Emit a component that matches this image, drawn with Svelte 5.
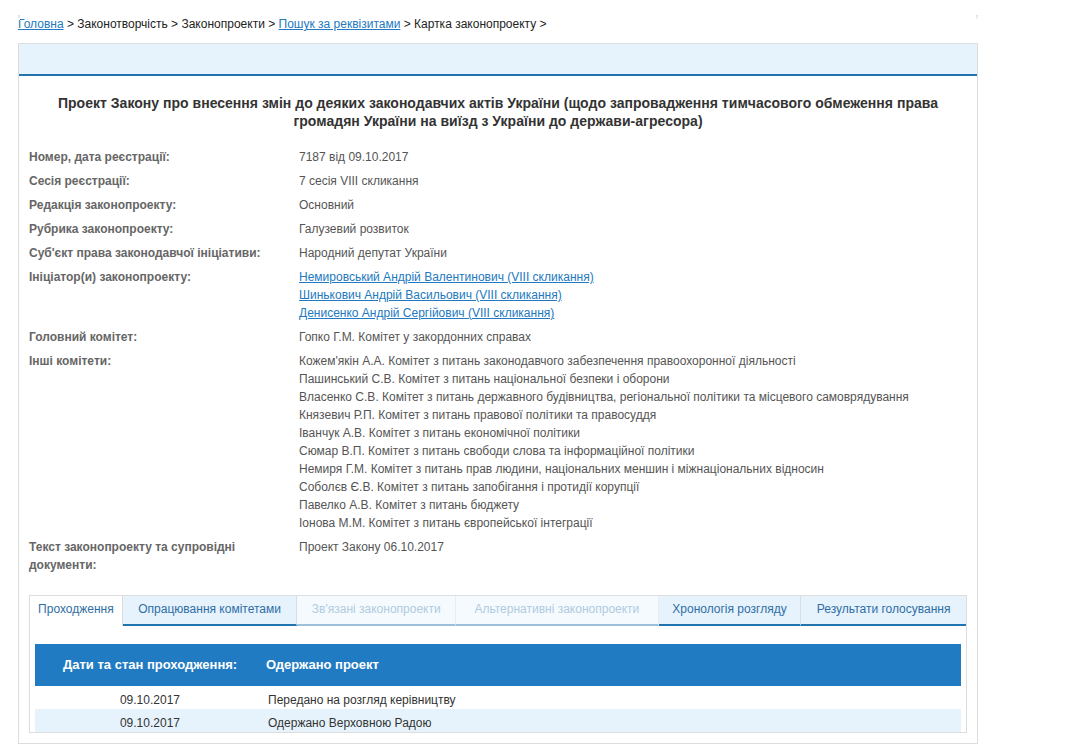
<script>
  const initiators = [
    'Немировський Андрій Валентинович (VIII скликання)',
    'Шинькович Андрій Васильович (VIII скликання)',
    'Денисенко Андрій Сергійович (VIII скликання)'
  ];
  const committees = [
    "Кожем'якін А.А. Комітет з питань законодавчого забезпечення правоохоронної діяльності",
    'Пашинський С.В. Комітет з питань національної безпеки і оборони',
    'Власенко С.В. Комітет з питань державного будівництва, регіональної політики та місцевого самоврядування',
    'Князевич Р.П. Комітет з питань правової політики та правосуддя',
    'Іванчук А.В. Комітет з питань економічної політики',
    'Сюмар В.П. Комітет з питань свободи слова та інформаційної політики',
    'Немиря Г.М. Комітет з питань прав людини, національних меншин і міжнаціональних відносин',
    'Соболєв Є.В. Комітет з питань запобігання і протидії корупції',
    'Павелко А.В. Комітет з питань бюджету',
    'Іонова М.М. Комітет з питань європейської інтеграції'
  ];
  const tabs = [
    { name: 'Проходження', width: 93, state: 'active' },
    { name: 'Опрацювання комітетами', width: 175, state: '' },
    { name: "Зв'язані законопроекти", width: 159, state: 'off' },
    { name: 'Альтернативні законопроекти', width: 203, state: 'off' },
    { name: 'Хронологія розгляду', width: 143, state: '' },
    { name: 'Результати голосування', width: 165, state: '' }
  ];
  const stages = [
    { date: '09.10.2017', text: 'Передано на розгляд керівництву' },
    { date: '09.10.2017', text: 'Одержано Верховною Радою' }
  ];
</script>

<div class="page">
  <div class="crumbs">
    <a href="#top">Головна</a> &gt; Законотворчість &gt; Законопроекти &gt;
    <a href="#top">Пошук за реквізитами</a> &gt; Картка законопроекту &gt;
  </div>

  <div class="panel">
    <div class="band"></div>
    <h1>Проект Закону про внесення змін до деяких законодавчих актів України (щодо запровадження тимчасового обмеження права громадян України на виїзд з України до держави-агресора)</h1>

    <dl>
      <dt>Номер, дата реєстрації:</dt>
      <dd>7187 від 09.10.2017</dd>
      <dt>Сесія реєстрації:</dt>
      <dd>7 сесія VIII скликання</dd>
      <dt>Редакція законопроекту:</dt>
      <dd>Основний</dd>
      <dt>Рубрика законопроекту:</dt>
      <dd>Галузевий розвиток</dd>
      <dt>Суб'єкт права законодавчої ініціативи:</dt>
      <dd>Народний депутат України</dd>
      <dt>Ініціатор(и) законопроекту:</dt>
      <dd>
        {#each initiators as name}
          <div><a href="#top">{name}</a></div>
        {/each}
      </dd>
      <dt>Головний комітет:</dt>
      <dd>Гопко Г.М. Комітет у закордонних справах</dd>
      <dt>Інші комітети:</dt>
      <dd>
        {#each committees as line}
          <div>{line}</div>
        {/each}
      </dd>
      <dt>Текст законопроекту та супровідні документи:</dt>
      <dd>Проект Закону 06.10.2017</dd>
    </dl>

    <div class="tabbox">
      <div class="tabs">
        {#each tabs as tab}
          <div class="tab {tab.state}" style="width: {tab.width}px">{tab.name}</div>
        {/each}
      </div>
      <div class="content">
        <div class="thead">
          <div class="th-date">Дати та стан проходження:</div>
          <div>Одержано проект</div>
        </div>
        {#each stages as stage}
          <div class="stage">
            <div class="date">{stage.date}</div>
            <div>{stage.text}</div>
          </div>
        {/each}
      </div>
    </div>
  </div>
</div>

<style>
  :global(body) {
    margin: 0;
    background: #fff;
    overflow: hidden;
  }

  .page {
    width: 960px;
    height: 731px;
    padding: 15px 0 0 18px;
    font-family: "Liberation Sans", Arial, sans-serif;
    font-size: 12px;
    line-height: 18px;
    color: #555;
  }

  a {
    color: #2279c1;
    text-decoration: underline;
  }

  .crumbs {
    position: relative;
    height: 28px;
    color: #222;
    white-space: nowrap;
  }

  /* faint corner marks above the panel */
  .crumbs::before,
  .crumbs::after {
    content: "";
    position: absolute;
    top: 0;
    width: 2px;
    height: 5px;
    background: linear-gradient(#ddd, #fff);
  }

  .crumbs::before {
    left: 0;
  }

  .crumbs::after {
    left: 958px;
  }

  .panel {
    height: 699px;
    border: 1px solid #ddd;
    padding: 0 10px;
  }

  .band {
    height: 30px;
    margin: 0 -10px;
    background: #e6f3fc;
    border-bottom: 2px solid #2274ae;
  }

  h1 {
    margin: 18px 19px 18px;
    font-size: 14px;
    line-height: 18px;
    font-weight: bold;
    text-align: center;
    color: #333;
    letter-spacing: 0.02px;
  }

  dl {
    display: grid;
    grid-template-columns: 270px 1fr;
    margin: 0;
  }

  dt {
    font-weight: bold;
    color: #666;
    padding-bottom: 6px;
    padding-right: 20px;
  }

  dd {
    margin: 0;
    padding-bottom: 6px;
  }

  .tabbox {
    margin-top: 15px;
    width: 936px;
    height: 136px;
    border: 1px solid #ddd;
    overflow: hidden;
  }

  .tabs {
    display: flex;
    height: 30px;
  }

  .tab {
    box-sizing: border-box;
    height: 30px;
    line-height: 26px;
    text-align: center;
    color: #2f6ea5;
    background: #e6f3fc;
    border-right: 1px solid #d8dfe5;
    border-bottom: 2px solid #2274ae;
  }

  .tab:last-child {
    border-right: 0;
  }

  .tab.active {
    background: #fff;
    border-bottom: 0;
    border-right: 1px solid #ddd;
  }

  .tab.off {
    color: #b0cbe0;
    background: #f5fafe;
    border-right-color: #e6edf3;
    border-bottom-color: #9cc0dc;
  }

  .content {
    padding: 18px 5px 0;
  }

  .thead {
    display: flex;
    height: 42px;
    align-items: center;
    background: #217bc3;
    color: #fff;
    font-size: 13px;
    font-weight: bold;
  }

  .th-date {
    width: 231px;
    padding-left: 28px;
    box-sizing: border-box;
  }

  .stage {
    display: flex;
    height: 23px;
    box-sizing: border-box;
    padding-top: 5px;
    align-items: center;
    color: #333;
  }

  .stage:nth-child(odd) {
    background: #e6f3fc;
  }

  .date {
    width: 233px;
    padding-right: 88px;
    box-sizing: border-box;
    text-align: right;
  }
</style>
